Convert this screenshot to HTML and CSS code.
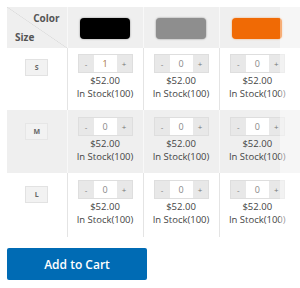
FILE: index.html
```html
<!DOCTYPE html>
<html lang="en">
<head>
  <meta charset="UTF-8" />
  <title>Product Grid</title>
  <link rel="stylesheet" href="styles.css">
</head>
<body>
  <div class="grid-wrap">
    <table class="grid">
      <colgroup>
        <col class="col-label">
        <col class="col-opt">
        <col class="col-opt">
        <col class="col-end">
      </colgroup>
      <!-- 색상 헤더 -->
      <tr class="head">
        <th class="corner">
          <span class="corner-color">Color</span>
          <span class="corner-size">Size</span>
        </th>
        <th><span class="swatch black"></span></th>
        <th><span class="swatch gray"></span></th>
        <th><span class="swatch orange"></span></th>
      </tr>

      <tr class="first">
        <td class="size"><span class="size-tag">S</span></td>
        <td class="cell">
          <div class="qty"><button>-</button><input class="active" value="1"><button>+</button></div>
          <div class="price">$52.00</div>
          <div class="stock">In Stock(100)</div>
        </td>
        <td class="cell">
          <div class="qty"><button>-</button><input value="0"><button>+</button></div>
          <div class="price">$52.00</div>
          <div class="stock">In Stock(100)</div>
        </td>
        <td class="cell">
          <div class="qty"><button>-</button><input value="0"><button>+</button></div>
          <div class="price">$52.00</div>
          <div class="stock">In Stock(100)</div>
        </td>
      </tr>

      <tr class="alt">
        <td class="size"><span class="size-tag">M</span></td>
        <td class="cell">
          <div class="qty"><button>-</button><input value="0"><button>+</button></div>
          <div class="price">$52.00</div>
          <div class="stock">In Stock(100)</div>
        </td>
        <td class="cell">
          <div class="qty"><button>-</button><input value="0"><button>+</button></div>
          <div class="price">$52.00</div>
          <div class="stock">In Stock(100)</div>
        </td>
        <td class="cell">
          <div class="qty"><button>-</button><input value="0"><button>+</button></div>
          <div class="price">$52.00</div>
          <div class="stock">In Stock(100)</div>
        </td>
      </tr>

      <tr class="last">
        <td class="size"><span class="size-tag">L</span></td>
        <td class="cell">
          <div class="qty"><button>-</button><input value="0"><button>+</button></div>
          <div class="price">$52.00</div>
          <div class="stock">In Stock(100)</div>
        </td>
        <td class="cell">
          <div class="qty"><button>-</button><input value="0"><button>+</button></div>
          <div class="price">$52.00</div>
          <div class="stock">In Stock(100)</div>
        </td>
        <td class="cell">
          <div class="qty"><button>-</button><input value="0"><button>+</button></div>
          <div class="price">$52.00</div>
          <div class="stock">In Stock(100)</div>
        </td>
      </tr>
    </table>
  </div>

  <button class="add-cart">Add to Cart</button>
</body>
</html>
```

FILE: styles.css
```css
/* 기본 페이지 */
body {
  margin: 0;
  padding: 7px 0 0 7px;
  background: #fff;
  color: #444;
  font-family: "Open Sans", "Liberation Sans", sans-serif;
}

/* 옵션 표 (오른쪽 끝은 흐리게) */
.grid-wrap {
  position: relative;
  width: 293px;
}

.grid-wrap::after {
  content: "";
  position: absolute;
  top: 0;
  right: 0;
  bottom: 0;
  width: 20px;
  background: rgba(255, 255, 255, 0.45);
}

.grid {
  border-collapse: collapse;
  table-layout: fixed;
  width: 293px;
}

.col-label {
  width: 60px;
}

.col-opt {
  width: 76px;
}

.col-end {
  width: 81px;
}

.grid th,
.grid td {
  padding: 0;
  border-left: 1px solid #e4e4e4;
}

.grid th:first-child,
.grid td:first-child {
  border-left: none;
}

/* 헤더 줄 */
.grid tr.head {
  height: 41px;
  background: #efefef;
}

.grid .head th {
  border-left-color: #f8f8f8;
  vertical-align: middle;
  text-align: center;
}

.grid .head th:last-child {
  padding-right: 5px;
}

.corner {
  position: relative;
  background: linear-gradient(to top right, transparent calc(50% - 0.6px), #dcdcdc, transparent calc(50% + 0.6px));
  font-size: 10px;
  font-weight: 700;
  color: #555;
}

.corner-color {
  position: absolute;
  top: 4px;
  right: 7px;
}

.corner-size {
  position: absolute;
  left: 8px;
  bottom: 4px;
}

.swatch {
  display: block;
  width: 50px;
  height: 21px;
  margin: 1px auto 0;
  border-radius: 4px;
  box-shadow: 0 0 2px rgba(0, 0, 0, 0.45);
}

.black {
  background: #000;
}

.gray {
  background: #8e8e8e;
}

.orange {
  background: #f06a05;
  box-shadow: 0 0 2px rgba(240, 106, 5, 0.6);
}

/* 사이즈 줄 */
.grid tr.first {
  height: 62px;
}

.grid tr.alt {
  height: 63px;
  background: #efefef;
}

.grid tr.alt td {
  border-left-color: #f8f8f8;
}

.grid tr.last {
  height: 64px;
}

.grid .size,
.grid .cell {
  vertical-align: top;
  text-align: center;
}

.grid .size {
  padding-top: 11px;
}

.grid .alt .size,
.grid .last .size {
  padding-top: 13px;
}

.grid .cell {
  padding-top: 6px;
}

.grid .alt .cell,
.grid .last .cell {
  padding-top: 7px;
}

.grid .cell:last-child {
  padding-right: 5px;
}

.size-tag {
  display: block;
  width: 21px;
  height: 15px;
  margin: 0 auto;
  line-height: 15px;
  border: 1px solid #e2e2e2;
  background: #f2f2f2;
  font-size: 7px;
  font-weight: 700;
  color: #666;
}

.alt .size-tag {
  border-color: #e6e6e6;
}

/* 수량 입력 */
.qty {
  display: flex;
  width: 55px;
  height: 19px;
  margin: 0 auto;
  border: 1px solid #dedede;
  box-sizing: border-box;
}

.qty button {
  width: 15px;
  padding: 0;
  border: none;
  background: #e8e8e8;
  color: #777;
  font-family: inherit;
  font-size: 8px;
  line-height: 17px;
}

.qty input {
  width: 23px;
  padding: 0;
  border: none;
  background: #fff;
  color: #888;
  font-family: inherit;
  font-size: 9px;
  text-align: center;
}

.qty input.active {
  color: #a8703a;
}

.price,
.stock {
  font-size: 9.5px;
  line-height: 13px;
  color: #444;
}

.price {
  margin-top: 1px;
}

/* 장바구니 버튼 */
.add-cart {
  display: block;
  width: 140px;
  height: 32px;
  margin-top: 11px;
  border: none;
  border-radius: 2px;
  background: #006bb4;
  color: #fff;
  font-family: inherit;
  font-size: 12px;
  font-weight: 600;
  cursor: pointer;
}
```
